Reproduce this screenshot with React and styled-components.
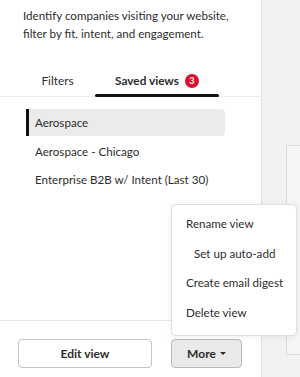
import React from 'react';
import styled, { createGlobalStyle } from 'styled-components';

const GlobalStyle = createGlobalStyle`
  body {
    margin: 0;
    font-family: "Lato", "Liberation Sans", sans-serif;
    color: #33475b;
  }
`;

const Page = styled.div`
  width: 300px;
  height: 377px;
  display: flex;
  overflow: hidden;
  background: #f2f2f2;
`;

const Panel = styled.div`
  position: relative;
  width: 261px;
  flex-shrink: 0;
  background: #fff;
  border-right: 1px solid #e3e3e3;
  display: flex;
  flex-direction: column;
`;

const Intro = styled.p`
  margin: 0;
  padding: 7px 20px 0 23px;
  font-size: 11.6px;
  line-height: 18px;
  color: #2d2d2d;
`;

const Tabs = styled.div`
  display: flex;
  margin-top: 22px;
  padding-left: 20px;
  border-bottom: 1px solid #ececec;
`;

const Tab = styled.div`
  width: ${p => p.$width}px;
  height: 31px;
  display: flex;
  align-items: center;
  justify-content: center;
  gap: 6px;
  font-size: 11.8px;
  font-weight: ${p => (p.$active ? 700 : 400)};
  color: #2d2d2d;
  position: relative;
  &::after {
    content: '';
    display: ${p => (p.$active ? 'block' : 'none')};
    position: absolute;
    left: 0;
    right: 0;
    bottom: -1px;
    height: 3px;
    border-radius: 2px;
    background: #111;
  }
`;

const Badge = styled.span`
  width: 14px;
  height: 14px;
  border-radius: 50%;
  background: #d8112d;
  color: #fff;
  font-size: 9px;
  font-weight: 700;
  display: flex;
  align-items: center;
  justify-content: center;
`;

const ViewList = styled.ul`
  list-style: none;
  margin: 12px 0 0;
  padding: 0 36px 0 26px;
  display: flex;
  flex-direction: column;
  gap: 1.5px;
`;

const ViewItem = styled.li`
  height: 27px;
  display: flex;
  align-items: center;
  padding-left: 9px;
  font-size: 11.6px;
  color: #2d2d2d;
  border-radius: 0 4px 4px 0;
  background: ${p => (p.$selected ? '#ebebeb' : 'transparent')};
  box-shadow: ${p => (p.$selected ? 'inset 3px 0 0 #111' : 'none')};
`;

const Spacer = styled.div`
  flex: 1;
`;

const Footer = styled.div`
  border-top: 1px solid #e6e6e6;
  padding: 18px 0 9px 18px;
  display: flex;
  gap: 19px;
`;

const Button = styled.button`
  height: 29px;
  width: ${p => p.$width}px;
  border-radius: 4px;
  border: 1px solid ${p => (p.$muted ? '#b9b9b9' : '#c4c4c4')};
  background: ${p => (p.$muted ? '#e9e9e9' : '#fff')};
  font-family: inherit;
  font-size: 12px;
  font-weight: 700;
  color: #2d2d2d;
  display: flex;
  align-items: center;
  justify-content: center;
  gap: 4px;
  padding: 0;
`;

const Caret = styled.span`
  width: 0;
  height: 0;
  border-left: 3px solid transparent;
  border-right: 3px solid transparent;
  border-top: 3px solid #2d2d2d;
`;

const Menu = styled.div`
  position: absolute;
  left: 171px;
  top: 204px;
  width: 126px;
  height: 132px;
  box-sizing: border-box;
  background: #fff;
  border: 1px solid #e0e0e0;
  border-radius: 5px;
  box-shadow: 0 1px 6px rgba(0, 0, 0, 0.08);
  padding: 4px 0;
  display: flex;
  flex-direction: column;
  z-index: 2;
`;

const MenuItem = styled.div`
  height: 29.5px;
  display: flex;
  align-items: center;
  padding-left: ${p => (p.$indent ? 22 : 14)}px;
  font-size: 11.6px;
  color: #2d2d2d;
  white-space: nowrap;
`;

const Side = styled.div`
  flex: 1;
  padding: 145px 0 22px 24px;
  display: flex;
`;

const SideCard = styled.div`
  flex: 1;
  background: #f6f6f6;
  border: 1px solid #dadada;
  border-right: none;
`;

const views = ['Aerospace', 'Aerospace - Chicago', 'Enterprise B2B w/ Intent (Last 30)'];

export default function App() {
  return (
    <>
      <GlobalStyle />
      <Page>
        <Panel>
          <Intro>
            Identify companies visiting your website, filter by fit, intent, and engagement.
          </Intro>
          <Tabs>
            <Tab $width={75}>Filters</Tab>
            <Tab $width={124} $active>
              Saved views <Badge>3</Badge>
            </Tab>
          </Tabs>
          <ViewList>
            {views.map((v, i) => (
              <ViewItem key={v} $selected={i === 0}>
                {v}
              </ViewItem>
            ))}
          </ViewList>
          <Spacer />
          <Footer>
            <Button $width={134}>Edit view</Button>
            <Button $width={71} $muted>
              More <Caret />
            </Button>
          </Footer>
          <Menu>
            <MenuItem>Rename view</MenuItem>
            <MenuItem $indent>Set up auto-add</MenuItem>
            <MenuItem>Create email digest</MenuItem>
            <MenuItem>Delete view</MenuItem>
          </Menu>
        </Panel>
        <Side>
          <SideCard />
        </Side>
      </Page>
    </>
  );
}
